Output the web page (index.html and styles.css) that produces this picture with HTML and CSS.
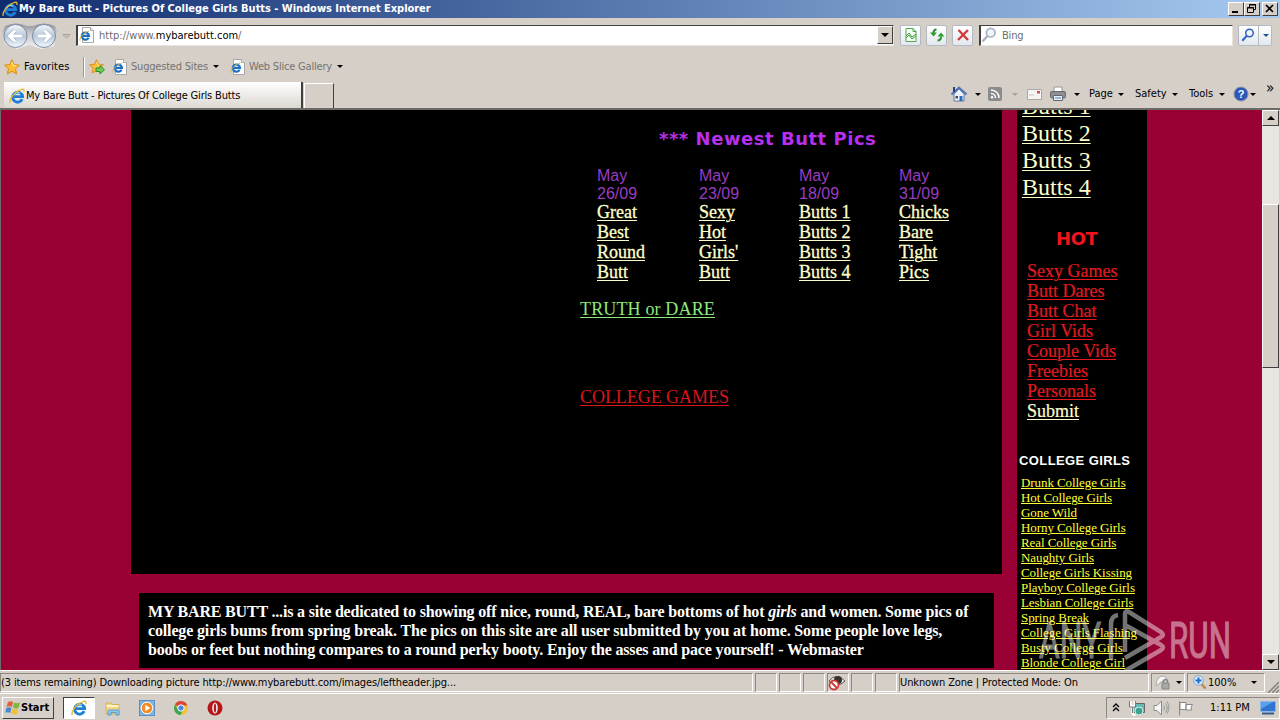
FILE: index.html
```
<!DOCTYPE html>
<html lang="en">
<head>
    <meta charset="UTF-8"/>
    <title>My Bare Butt - Pictures Of College Girls Butts</title>
    <link rel="stylesheet" href="styles.css">
</head>
<body>
<!-- ========== ICONS ========== -->
<svg class="defs" width="0" height="0">
    <linearGradient id="orb" x1="0" y1="0" x2="0" y2="1">
        <stop offset="0" stop-color="#f4f8fc"/>
        <stop offset=".5" stop-color="#b9c6d8"/>
        <stop offset="1" stop-color="#f2faff"/>
    </linearGradient>
    <linearGradient id="cradle" x1="0" y1="0" x2="0" y2="1">
        <stop offset="0" stop-color="#8f909c"/>
        <stop offset=".4" stop-color="#c9c8cc"/>
        <stop offset="1" stop-color="#f3f3f3"/>
    </linearGradient>
    <symbol id="ie" viewBox="0 0 16 16">
        <path d="M13.2 11.2A5 5 0 1 1 13.6 8.6H5.2" fill="none" stroke="#1f7fd6" stroke-width="2.9"/>
        <path d="M4.6 7A4.2 4.2 0 0 1 11 5.2" fill="none" stroke="#7fd0fa" stroke-width="1.200"/>
        <path d="M1.4 15C-.6 12.600 5.500 3 13 1.300c2.200-.4 2.400 1.200 1.700 2.800" fill="none" stroke="#e9b92c" stroke-width="1.300"/>
    </symbol>
    <symbol id="iepage" viewBox="0 0 16 16">
        <path d="M3.500.5h8l3 3v12h-11z" fill="#fff" stroke="#a8a8a8"/>
        <path d="M11.500.5v3h3" fill="#eee" stroke="#a8a8a8"/>
        <path d="M9.600 10.800A3.600 3.600 0 1 1 10 8.900H4" fill="none" stroke="#1b6fc4" stroke-width="2.200"/>
        <path d="M1 13.600C0 11 5 5 10.300 4" fill="none" stroke="#d9b63a"/>
    </symbol>
    <symbol id="star" viewBox="0 0 16 16">
        <path d="M8 .8l2.200 4.800 5.200.6-3.900 3.500 1.100 5.200L8 12.300l-4.600 2.600 1.100-5.200L.6 6.200l5.200-.6z" fill="#fbc034" stroke="#dc8a17"/>
        <path d="M8 3l1.300 3.500 3 .3" fill="none" stroke="#ffeaa0"/>
    </symbol>
    <symbol id="lens" viewBox="0 0 16 16">
        <circle cx="9.700" cy="5.700" r="4.300" fill="#eef6fc" stroke="currentColor" stroke-width="1.700"/>
        <path d="M6.500 9l-5 5.500" stroke="currentColor" stroke-width="2.400"/>
    </symbol>
</svg>

<!-- ========== TITLE BAR ========== -->
<div class="titlebar">
    <svg class="i16"><use href="#ie"/></svg>
    <span class="caption">My Bare Butt - Pictures Of College Girls Butts - Windows Internet Explorer</span>
    <div class="winbtns">
        <b><svg width="13" height="12"><path d="M3 9h6" stroke="#000" stroke-width="2"/></svg></b>
        <b><svg width="13" height="12"><path d="M4.500 4V1.500h6v5H9M4 2h7M2.500 4.500h6v5h-6zM2 5h7" fill="none" stroke="#000"/></svg></b>
        <b class="close"><svg width="13" height="12"><path d="M3 2l7 7M10 2L3 9" stroke="#000" stroke-width="1.700"/></svg></b>
    </div>
</div>

<!-- ========== ADDRESS ROW ========== -->
<div class="navbar">
    <svg class="orbs" width="70" height="30">
        <path d="M4 4q11-5 22 0h6q11-5 22 0l2 6-3 14-12 3-13-4-12 4L4 22 1 10z" fill="url(#cradle)"/>
        <circle cx="14.500" cy="14" r="11.500" fill="url(#orb)" stroke="#7c8ba2"/>
        <circle cx="43" cy="14" r="11.500" fill="url(#orb)" stroke="#7c8ba2"/>
        <path d="M21 14H9M14 8.500L8.500 14l5.500 5.500M36.500 14h12M43.500 8.500L49 14l-5.500 5.500" fill="none" stroke="#9fb0c6" stroke-width="4.200"/>
        <path d="M21 14H9M14 8.500L8.500 14l5.500 5.500M36.500 14h12M43.500 8.500L49 14l-5.500 5.500" fill="none" stroke="#fff" stroke-width="3"/>
        <path d="M62 12.500h7L65.500 16z" fill="#c9c5bf" stroke="#a5a19b"/>
    </svg>
    <div class="field address">
        <svg class="i16"><use href="#iepage"/></svg>
        <span class="url">http://www.<em>mybarebutt.com</em>/</span>
        <b class="drop"><i class="arrow"></i></b>
    </div>
    <div class="tool t1"><svg width="16" height="16"><path d="M3 1.500h7l3 3v10H3zM10 1.500v3h3" fill="#f4fff2" stroke="#55a552"/><path d="M3 9l3-3 3 4 4-3M3 11l3-3 3 4 4-3" fill="none" stroke="#3f9a3c"/></svg></div>
    <div class="tool t2"><svg width="16" height="16"><path d="M7.500 2.500Q4.500 2.500 4.500 6M8.500 13.500q3.500 0 3.500-4" fill="none" stroke="#2f8f33" stroke-width="2"/><path d="M1 5.500h7L4.500 9.500zM8.500 9.500h7L12 5.500z" fill="#2f9c33"/></svg></div>
    <div class="tool t3"><svg width="16" height="16"><path d="M3.500 3l9.500 10M13 3L3 13" stroke="#cf3a3a" stroke-width="2.400"/></svg></div>
    <div class="field search">
        <svg class="i16 grey"><use href="#lens"/></svg>
        <span>Bing</span>
    </div>
    <div class="tool go"><svg class="i14 blue"><use href="#lens"/></svg><u><i class="arrow sm"></i></u></div>
</div>

<!-- ========== FAVORITES ROW ========== -->
<div class="favbar">
    <svg class="i16"><use href="#star"/></svg>
    <span class="fav">Favorites</span>
    <i class="sep"></i>
    <svg class="i16" viewBox="0 0 16 16"><use href="#star" width="15" height="15"/><path d="M7 9h4V6.500l4.500 4.200L11 15v-2.500H7z" fill="#6bcf55" stroke="#2f8f2b"/></svg>
    <svg class="i16 g1"><use href="#iepage"/></svg>
    <span class="dim sugg">Suggested Sites</span><i class="arrow"></i>
    <svg class="i16 g2"><use href="#iepage"/></svg>
    <span class="dim slice">Web Slice Gallery</span><i class="arrow"></i>
</div>

<!-- ========== TAB ROW ========== -->
<div class="tabrow">
    <div class="tab"><svg class="i16"><use href="#ie"/></svg><span>My Bare Butt - Pictures Of College Girls Butts</span></div>
    <div class="newtab"></div>
    <div class="commands">
        <svg class="i16" viewBox="0 0 16 16"><path d="M3 8v7h10V8L8 3z" fill="#eef3fb" stroke="#5f78a8"/><path d="M.5 8.500L8 1.500l7.500 7" fill="none" stroke="#5376b8" stroke-width="2"/><path d="M3 1v5" stroke="#333a80" stroke-width="2"/><path d="M8.500 10h3v5h-3z" fill="#2d6cb5"/><path d="M4.500 10h2.500v2.500H4.500z" fill="#4a4a4a"/></svg>
        <i class="arrow a1"></i>
        <svg class="i14 rss" viewBox="0 0 14 14"><rect width="14" height="14" rx="2" fill="#8b8b8b"/><path d="M3 6.500a4.500 4.500 0 0 1 4.500 4.500M3 3a8 8 0 0 1 8 8" fill="none" stroke="#fff" stroke-width="1.500"/><circle cx="4" cy="10.300" r="1.200" fill="#fff"/></svg>
        <i class="arrow pale a2"></i>
        <svg class="mail" width="15" height="11"><path d="M.5.5h14v10H.5z" fill="#f6f3f3" stroke="#aaa6a6"/><path d="M10 2h3v2.500h-3z" fill="#d64d4d"/><path d="M2 6h5" stroke="#c8c4c4"/></svg>
        <svg class="i16 print" viewBox="0 0 16 16"><path d="M4 1h8v5H4z" fill="#fff" stroke="#999"/><rect x=".5" y="5.500" width="15" height="6.500" rx="1.500" fill="#8d8f93" stroke="#66686c"/><path d="M3.500 9.500h9v5h-9z" fill="#e7f0f8" stroke="#666"/><path d="M5 12h6" stroke="#4a7cb5"/></svg>
        <i class="arrow a3"></i>
        <span class="c1">Page</span><i class="arrow"></i>
        <span class="c2">Safety</span><i class="arrow"></i>
        <span class="c3">Tools</span><i class="arrow"></i>
        <svg class="i16 help" viewBox="0 0 16 16"><circle cx="8" cy="8" r="7" fill="#2c56b8" stroke="#8a93a8"/><text x="8" y="12" text-anchor="middle">?</text></svg>
        <i class="arrow a4"></i>
        <span class="more">»</span>
    </div>
</div>

<!-- ========== PAGE ========== -->
<div class="viewport">
    <div class="page">
        <div class="main">
            <div class="board">
                <h2>*** Newest Butt Pics</h2>
                <div class="pics">
                    <div><p>May<br/>26/09</p><a>Great</a><a>Best</a><a>Round</a><a>Butt</a></div>
                    <div><p>May<br/>23/09</p><a>Sexy</a><a>Hot</a><a>Girls'</a><a>Butt</a></div>
                    <div><p>May<br/>18/09</p><a>Butts 1</a><a>Butts 2</a><a>Butts 3</a><a>Butts 4</a></div>
                    <div><p>May<br/>31/09</p><a>Chicks</a><a>Bare</a><a>Tight</a><a>Pics</a></div>
                </div>
                <a class="truth">TRUTH or DARE</a>
                <a class="games">COLLEGE GAMES</a>
            </div>
            <div class="about">
                <div class="l1">MY BARE BUTT ...is a site dedicated to showing off nice, round, REAL, bare bottoms of hot <em>girls</em> and women. Some pics of</div>
                <div>college girls bums from spring break. The pics on this site are all user submitted by you at home. Some people love legs,</div>
                <div class="l3">boobs or feet but nothing compares to a round perky booty. Enjoy the asses and pace yourself! - Webmaster</div>
            </div>
        </div>
        <div class="side">
            <div class="big"><a>Butts 1</a><a>Butts 2</a><a>Butts 3</a><a>Butts 4</a></div>
            <h3>HOT</h3>
            <div class="hot">
                <a>Sexy Games</a><a>Butt Dares</a><a>Butt Chat</a><a>Girl Vids</a><a>Couple Vids</a><a>Freebies</a><a>Personals</a><a class="submit">Submit</a>
            </div>
            <h4>COLLEGE GIRLS</h4>
            <div class="college">
                <a>Drunk College Girls</a><a>Hot College Girls</a><a>Gone Wild</a><a>Horny College Girls</a><a>Real College Girls</a><a>Naughty Girls</a><a>College Girls Kissing</a><a>Playboy College Girls</a><a>Lesbian College Girls</a><a>Spring Break</a><a>College Girls Flashing</a><a>Busty College Girls</a><a>Blonde College Girl</a>
            </div>
        </div>
    </div>
    <div class="scrollbar">
        <b><i class="arrow up"></i></b>
        <b class="thumb"></b>
        <b class="down"><i class="arrow"></i></b>
    </div>
    <svg class="watermark" width="200" height="62">
        <text x="2" y="50" textLength="62" lengthAdjust="spacingAndGlyphs">ANY</text>
        <text x="132" y="50" textLength="62" lengthAdjust="spacingAndGlyphs">RUN</text>
        <path d="M74 52V16q0-8 7-9M88 44V6q0-4 4-2l32 20q4 3 0 5L88 50M88 17l36 20q4 2 0 5L88 63" fill="none" stroke="#fff" stroke-width="4.500"/>
    </svg>
</div>

<!-- ========== STATUS BAR ========== -->
<div class="status">
    <div class="cell s0"><span>(3 items remaining) Downloading picture http://www.mybarebutt.com/images/leftheader.jpg...</span></div>
    <div class="cell"></div>
    <div class="cell"></div>
    <div class="cell"></div>
    <div class="cell"><svg width="18" height="17"><path d="M1 7q7-9 16 0-8 8-16 0z" fill="#eee" stroke="#555"/><circle cx="10" cy="6" r="4" fill="#38302c"/><circle cx="6" cy="11" r="4.500" fill="#fff" stroke="#cd3b37" stroke-width="1.800"/><path d="M3 8l6 6" stroke="#cd3b37" stroke-width="1.800"/></svg></div>
    <div class="cell"></div>
    <div class="cell"></div>
    <div class="cell zone"><span>Unknown Zone | Protected Mode: On</span></div>
    <div class="cell lock"><svg width="16" height="16"><path d="M1 12Q1 2 9 2l3 3-6 3z" fill="#f5f5f5" stroke="#aaa"/><path d="M7 9h7v6H7z" fill="#a8a8a8" stroke="#858585"/><path d="M8.500 9V7.500a2 2 0 0 1 4 0V9" fill="none" stroke="#858585" stroke-width="1.500"/></svg><i class="arrow"></i></div>
    <div class="cell zoom"><svg width="14" height="15"><path d="M8.500 9l4 4.500" stroke="#b98a4c" stroke-width="2.500"/><circle cx="5.500" cy="5.500" r="4.800" fill="#d9ecfb" stroke="#7da3cc"/><path d="M5.500 2.500v6M2.500 5.500h6" stroke="#1f6fc8" stroke-width="2"/></svg><span>100%</span><i class="arrow"></i></div>
    <svg class="grip" width="12" height="13"><path d="M1 13L12 2M5 13l7-7M9 13l3-3" stroke="#85817a" stroke-width="1.500"/></svg>
</div>

<!-- ========== TASKBAR ========== -->
<div class="taskbar">
    <div class="start">
        <svg width="16" height="16"><path d="M3 2q3-1.500 5 0L7 7Q4.500 5.500 1.500 7z" fill="#e2613a"/><path d="M9 2.500q3 1.500 6 0L13.500 8q-3 1-5.500-.5z" fill="#7db93f"/><path d="M1.300 8q2.700-1.500 5.200 0l-1.300 5Q3 11.500.3 12.800z" fill="#4b86d0"/><path d="M7.600 8.600q2.800 1.200 5.600.2L12 14q-3 1.200-5.600-.4z" fill="#f0c03a"/></svg>
        <span>Start</span>
    </div>
    <div class="task"><svg class="i16"><use href="#ie"/></svg></div>
    <svg class="k1" width="16" height="16"><path d="M1 3h5l1 1.500h7V14H1z" fill="#f3d684" stroke="#d0b063"/><path d="M1.500 6h12" stroke="#fff5c5" stroke-width="2"/><path d="M3 15v-4q0-1 1-1h9q1 0 1 1v4h-3v-2.500H6V15z" fill="#8cc8ee" stroke="#5a9bc9"/></svg>
    <svg class="k2" width="16" height="16"><rect x=".5" y=".5" width="15" height="15" fill="#7db4e6" stroke="#5b8fc4"/><circle cx="8" cy="8" r="5.800" fill="#f58a1f" stroke="#fff"/><path d="M6.300 4.800v6.400L11.300 8z" fill="#fff"/></svg>
    <svg class="k3" width="14" height="14"><circle cx="7" cy="7" r="7" fill="#f1c232"/><path d="M7 7L.8 3.700A7 7 0 0 1 13.500 4.500H7z" fill="#d8463a"/><path d="M.8 3.700A7 7 0 0 0 6.500 14L9.500 8 4 8z" fill="#3fa653"/><circle cx="7" cy="7" r="3.200" fill="#4a86e0" stroke="#fff"/></svg>
    <svg class="k4" width="16" height="16"><circle cx="8" cy="8" r="7.500" fill="#b5161a"/><ellipse cx="8" cy="8" rx="2.800" ry="5.500" fill="#f1e6e6"/><ellipse cx="8" cy="8" rx="1.100" ry="4.500" fill="#b5161a"/></svg>
    <div class="tray">
        <svg class="y1" width="8" height="9"><path d="M1 4l3-3 3 3M1 8l3-3 3 3" fill="none" stroke="#000" stroke-width="1.300"/></svg>
        <svg class="y2" width="16" height="16"><path d="M4.500 3.500h11v9h-11z" fill="#63b9b4" stroke="#666"/><circle cx="10" cy="11" r="4" fill="#3aa391" stroke="#d9eeea"/><path d="M1.500 1v5h4V1M3.500 6v7q0 2 3 2" fill="none" stroke="#fff" stroke-width="2.500"/><path d="M.5 1v6h6V1M3.500 7v6" fill="none" stroke="#777"/></svg>
        <svg class="y3" width="17" height="16"><path d="M1 5.500h3L8.500 1v14L4 10.500H1z" fill="#f5f5f5" stroke="#8a8a8a"/><path d="M10.500 5.500q2 2.500 0 5M12.500 3.500q3.500 4.500 0 9M14 1.500q4 6 0 12" fill="none" stroke="#999"/></svg>
        <svg class="y4" width="17" height="16"><path d="M2.500 1.500v14M3 2.500h6v7H3zM9 4.500h6.500L14 7l.5 3H9z" fill="#fff" stroke="#888"/></svg>
        <span>1:11 PM</span>
        <svg class="y5" width="16" height="14"><path d="M.5.5h15v10H.5z" fill="#2e74d0" stroke="#8fb6e2"/><path d="M1 8L13 1H1z" fill="#5ba0ec"/><path d="M2 12.500h12" stroke="#345b94" stroke-width="2"/></svg>
    </div>
</div>
</body>
</html>
```
FILE: styles.css
```
/* ========== GLOBAL STYLES ========== */
* {
  box-sizing: border-box;
}

body {
  margin: 0;
  width: 1280px;
  height: 720px;
  overflow: hidden;
  display: flex;
  flex-direction: column;
  background: #d5cfc8;
  color: #000;
  font: 11px/14px "DejaVu Sans Condensed", "DejaVu Sans", sans-serif;
  white-space: nowrap;
}

svg {
  flex: none;
  display: block;
}
.defs { position: absolute; }
.i16 { width: 16px; height: 16px; }
.i14 { width: 14px; height: 14px; }
.grey { color: #a9b3bf; }
.blue { color: #2a62c4; }

.arrow {
  flex: none;
  width: 0;
  height: 0;
  border: 3px solid transparent;
  border-top-color: #000;
  border-bottom: 0;
}
.arrow.pale { border-top-color: #a5a19b; }

/* ========== TITLE BAR ========== */
.titlebar {
  height: 18px;
  display: flex;
  align-items: center;
  padding: 0 2px;
  background: linear-gradient(90deg, #0f2b70, #a6caf0);
}
.caption {
  color: #fff;
  font-weight: bold;
  letter-spacing: -.03px;
  margin-left: 1px;
}
.winbtns {
  display: flex;
  margin-left: auto;
}
.winbtns b {
  width: 16px;
  height: 14px;
  background: #d5cfc8;
  border: 1px solid;
  border-color: #fff #404040 #404040 #fff;
}
.winbtns .close { margin-left: 2px; }

/* ========== ADDRESS ROW ========== */
.navbar {
  height: 37px;
  display: flex;
  align-items: center;
  padding-bottom: 3px;
}
.orbs { margin: 4px 5px 0 1px; }
.field {
  height: 21px;
  display: flex;
  align-items: center;
  background: #fff;
  border: 1px solid;
  border-color: #404040 #e8e4de #e8e4de #404040;
  border-left-width: 2px;
  color: #6d6d6d;
}
.address {
  width: 818px;
  padding-left: 1px;
}
.url { margin-left: 4px; padding-top: 2px; }
.url em {
  color: #000;
  font-style: normal;
}
.drop {
  width: 16px;
  height: 18px;
  margin-left: auto;
  background: #d5cfc8;
  border: 1px solid;
  border-color: #fff #404040 #404040 #fff;
  display: flex;
  align-items: center;
  justify-content: center;
}
.drop .arrow {
  border-width: 4px 4px 0;
}
.tool {
  width: 21px;
  height: 21px;
  display: flex;
  align-items: center;
  justify-content: center;
  background: linear-gradient(#fff, #e3e8ee);
  border: 1px solid #b4bac4;
  border-radius: 2px;
}
.t1 { margin-left: 6px; }
.t2, .t3 { margin-left: 5px; }
.search {
  width: 254px;
  margin-left: 6px;
}
.search span { margin-left: 5px; padding-top: 2px; letter-spacing: -.2px; }
.go {
  width: 34px;
  margin-left: 5px;
}
.go u {
  height: 19px;
  margin-left: 3px;
  padding: 8px 0 0 4px;
  border-left: 1px solid #b4bac4;
}
.go .arrow {
  display: block;
  border-top-color: #1d4f91;
}

/* ========== FAVORITES ROW ========== */
.favbar {
  height: 25px;
  display: flex;
  align-items: center;
  padding: 0 0 2px 4px;
}
.fav { width: 59px; margin-left: 4px; letter-spacing: .1px; }
.sep {
  width: 2px;
  height: 20px;
  border-left: 1px solid #9a958e;
  border-right: 1px solid #fff;
  margin-right: 4px;
}
.g1 { margin-left: 7px; }
.g2 { margin-left: 11px; }
.dim { color: #77736e; margin: 0 4px 0 3px; padding-top: 1px; letter-spacing: -.2px; }
.sugg { width: 78px; }
.slice { width: 84px; }

/* ========== TAB ROW ========== */
.tabrow {
  height: 30px;
  display: flex;
  align-items: flex-end;
  padding-left: 4px;
  border-bottom: 2px solid #6d6a66;
}
.tab {
  width: 299px;
  height: 26px;
  display: flex;
  align-items: center;
  padding: 1px 0 0 5px;
  background: linear-gradient(#fff, #dcd7d1);
  border-right: 2px solid #404040;
}
.tab span { margin-left: 1px; padding-top: 1px; letter-spacing: -.18px; }
.newtab {
  width: 30px;
  height: 25px;
  margin-left: 1px;
  border: 1px solid #fff;
  border-right: 1px solid #404040;
  border-bottom: 0;
}
.commands {
  display: flex;
  align-items: center;
  height: 28px;
  margin-left: 617px;
}
.a1 { margin-left: 8px; }
.rss { margin-left: 7px; }
.a2 { margin-left: 10px; }
.mail { margin-left: 9px; }
.print { margin-left: 8px; }
.a3 { margin-left: 8px; }
.c1, .c2, .c3 { margin-right: 4px; }
.c1 { width: 25px; margin-left: 9px; }
.c2 { width: 33px; margin-left: 11px; }
.c3 { width: 26px; margin-left: 11px; }
.help { margin-left: 8px; }
.help text {
  fill: #fff;
  font: bold 11px "Liberation Sans", sans-serif;
}
.a4 { margin-left: 1px; }
.more {
  margin-left: 10px;
  padding-bottom: 12px;
  font-size: 15px;
}

/* ========== PAGE ========== */
.viewport {
  position: relative;
  height: 560px;
  display: flex;
  border-left: 1px solid #6d6a66;
  overflow: hidden;
}
.page {
  width: 1261px;
  display: flex;
  padding-left: 130px;
  background: #990033;
  overflow: hidden;
}
.main { width: 871px; }
.board {
  height: 464px;
  padding: 17px 0 0 449px;
  background: #000;
}
.board h2 {
  margin: 0;
  padding-left: 79px;
  color: #b82fee;
  font: bold 18px/24px "DejaVu Sans", sans-serif;
  letter-spacing: .52px;
}
.pics {
  display: grid;
  grid-template-columns: 102px 100px 100px 100px;
  margin: 16px 0 0 17px;
}
.pics p {
  margin: 0 0 -1px;
  color: #9a3cc0;
  font: 16px/18px "Liberation Sans", sans-serif;
}
.page a {
  display: block;
  text-decoration: underline;
  text-decoration-thickness: 1px;
  text-underline-offset: 2px;
  font: 18px/20px "Liberation Serif", serif;
  color: #ffffcc;
}
.pics a { -webkit-text-stroke: .3px; }
.board .truth { color: #8ee878; margin-top: 17px; letter-spacing: .15px; }
.board .games { color: #d8141c; margin-top: 68px; letter-spacing: -.05px; }
.about {
  width: 855px;
  height: 75px;
  margin: 19px 0 0 8px;
  padding: 9px;
  background: #000;
  color: #fff;
  font: bold 16px/19px "Liberation Serif", serif;
  letter-spacing: -.15px;
}
.about .l1 { letter-spacing: -.18px; }
.about .l3 { letter-spacing: -.17px; }

.side {
  width: 130px;
  margin-left: 15px;
  background: #000;
}
.side .big { padding-left: 5px; margin-top: -17px; }
.side .big a { font-size: 24px; line-height: 27px; }
.side h3 {
  margin: 25px 0 0 39px;
  color: #f0141c;
  font: bold 18px/26px "DejaVu Sans", sans-serif;
  letter-spacing: -.4px;
}
.side .hot { padding: 9px 0 0 10px; }
.side .hot a { color: #e01a20; -webkit-text-stroke: .2px; }
.side .hot .submit { color: #ffffcc; }
.side h4 {
  margin: 32px 0 0 2px;
  color: #fff;
  font: bold 13px/16px "Liberation Sans", sans-serif;
  letter-spacing: .4px;
}
.college { padding: 6px 0 0 4px; }
.side .college a {
  color: #ffff33;
  font-size: 13px;
  line-height: 15px;
  letter-spacing: -.08px;
  text-underline-offset: 1px;
}

.scrollbar {
  width: 17px;
  height: 560px;
  display: flex;
  flex-direction: column;
  background: #e9e6e1;
}
.scrollbar b {
  flex: none;
  height: 16px;
  background: #d5cfc8;
  border: 1px solid;
  border-color: #fff #404040 #404040 #fff;
  display: flex;
  align-items: center;
  justify-content: center;
}
.scrollbar .thumb { height: 164px; margin-top: 78px; }
.scrollbar .down { margin-top: auto; }
.scrollbar .arrow { border-width: 4px 4px 0; }
.scrollbar .up { transform: rotate(180deg); }

/* Sits over the page, bottom right */
.watermark {
  position: absolute;
  right: 43px;
  bottom: 0;
  opacity: .45;
}
.watermark text {
  fill: #fff;
  stroke: #fff;
  font: 50px Roboto, sans-serif;
}

/* ========== STATUS BAR ========== */
.status {
  height: 24px;
  display: flex;
  align-items: center;
  border-top: 1px solid #fff;
  border-bottom: 1px solid #fff;
}
.cell {
  width: 22px;
  height: 19px;
  margin-right: 2px;
  display: flex;
  align-items: center;
  border: 1px solid;
  border-color: #8d8881 #fff #fff #8d8881;
  letter-spacing: -.12px;
}
.cell span { padding-top: 2px; }
.s0 { width: 753px; }
.zone { width: 250px; }
.lock { width: 34px; padding-left: 3px; }
.lock .arrow { margin-left: 5px; }
.zoom { width: 78px; padding-left: 5px; letter-spacing: 0; }
.zoom span { width: 30px; margin: 0 13px 0 1px; }
.grip { margin-top: 8px; }

/* ========== TASKBAR ========== */
.taskbar {
  height: 26px;
  display: flex;
  align-items: center;
  padding: 1px 0 0 2px;
}
.start {
  width: 52px;
  height: 22px;
  display: flex;
  align-items: center;
  padding-left: 2px;
  border: 1px solid;
  border-color: #fff #404040 #404040 #fff;
  font-weight: bold;
}
.task {
  width: 32px;
  height: 22px;
  margin-left: 9px;
  display: flex;
  align-items: center;
  justify-content: center;
  background: #fff;
  border: 1px solid;
  border-color: #404040 #fff #fff #404040;
}
.k1 { margin-left: 10px; }
.k2 { margin-left: 18px; }
.k3 { margin-left: 19px; }
.k4 { margin-left: 19px; }
.tray {
  width: 174px;
  height: 22px;
  margin-left: auto;
  display: flex;
  align-items: center;
  border: 1px solid;
  border-color: #8d8881 #fff #fff #8d8881;
}
.y1 { margin-left: 5px; }
.y2 { margin-left: 9px; }
.y3 { margin-left: 8px; }
.y4 { margin-left: 7px; }
.tray span { width: 40px; margin-left: 16px; }
.y5 { margin-left: 10px; }
```
